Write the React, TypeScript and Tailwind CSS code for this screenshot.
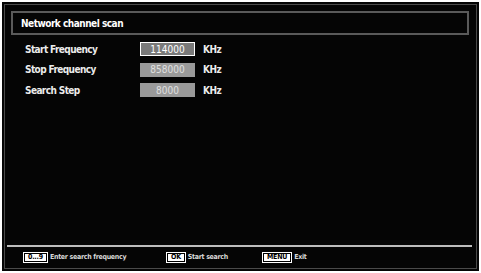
const rows = [
  { label: 'Start Frequency', value: '114000', active: true },
  { label: 'Stop Frequency', value: '858000', active: false },
  { label: 'Search Step', value: '8000', active: false },
];

function Key({ children }: { children: React.ReactNode }) {
  return (
    <span className="inline-flex bg-white p-[1px]">
      <span className="inline-flex items-center justify-center h-[9px] px-[3px] border border-black text-black text-[7px] font-bold leading-none tracking-[-0.2px]">
        {children}
      </span>
    </span>
  );
}

export default function App() {
  return (
    <div
      className="w-[481px] h-[273px] bg-white p-[2px]"
      style={{ fontFamily: '"DejaVu Sans Condensed", "DejaVu Sans", sans-serif' }}
    >
      <div className="w-full h-full bg-[#050505] p-[2px]">
        <div className="w-full h-full border border-[#4a4a4a] flex flex-col px-[6px] pt-[6px]">
          {/* Title */}
          <div className="h-[24px] border-2 border-[#5a5a5a] flex items-center pl-[8px] mr-[1px]">
            <span className="text-white text-[10px] font-bold tracking-[-0.5px]">Network channel scan</span>
          </div>

          {/* Rows */}
          <div className="flex flex-col gap-[6.5px] mt-[7px] pl-[14px]">
            {rows.map((r) => (
              <div key={r.label} className="flex items-center h-[14px]">
                <span className="w-[115px] text-[#ececec] text-[10px] font-bold tracking-[-0.6px]">{r.label}</span>
                <span
                  className={`w-[55px] h-[14px] flex items-center justify-center text-[10px] ${
                    r.active
                      ? 'bg-[#7a7a7a] border border-white text-white'
                      : 'bg-[#9a9a9a] text-[#e0e0e0]'
                  }`}
                >
                  {r.value}
                </span>
                <span className="ml-[8px] text-[#ececec] text-[10px] font-bold tracking-[-0.5px]">KHz</span>
              </div>
            ))}
          </div>

          <div className="flex-1" />

          {/* Footer */}
          <div className="border-t-2 border-[#bdbdbd] -ml-[4px] mr-[-2px]" />
          <div className="flex items-center h-[21px] pl-[12px] text-[#d8d8d8] text-[7px] font-bold tracking-[-0.3px]">
            <div className="flex items-center gap-[2px] w-[143px]">
              <Key>0...9</Key>
              <span>Enter search frequency</span>
            </div>
            <div className="flex items-center gap-[2px] w-[96px]">
              <Key>OK</Key>
              <span>Start search</span>
            </div>
            <div className="flex items-center gap-[2px]">
              <Key>MENU</Key>
              <span>Exit</span>
            </div>
          </div>
        </div>
      </div>
    </div>
  );
}
